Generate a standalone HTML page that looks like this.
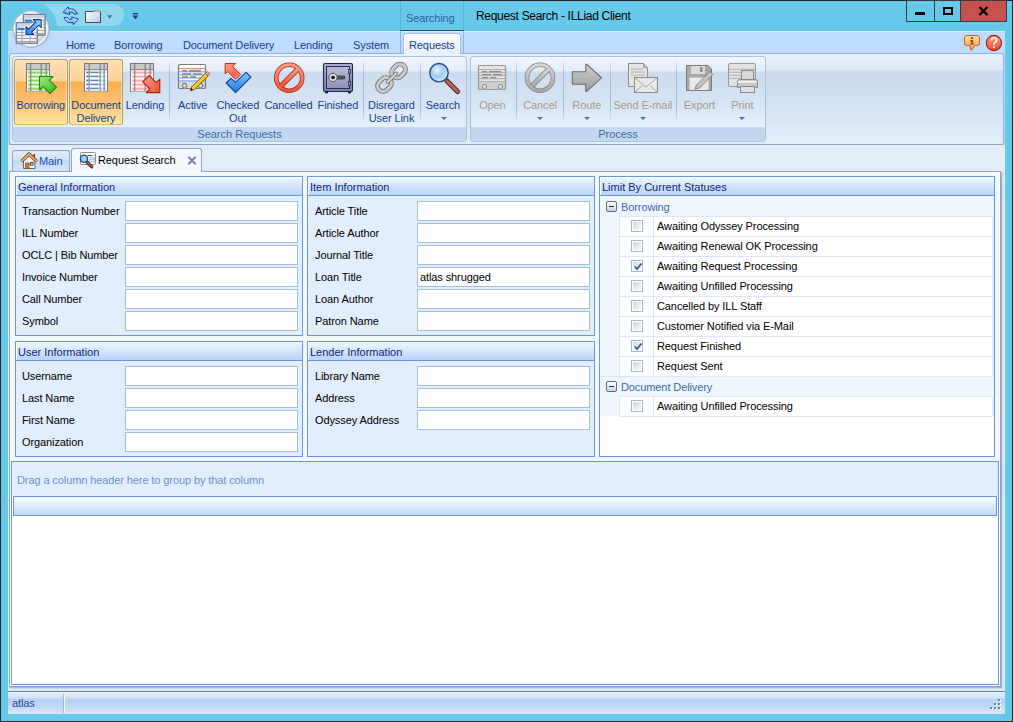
<!DOCTYPE html>
<html><head><meta charset="utf-8">
<style>
*{box-sizing:border-box;margin:0;padding:0}
html,body{width:1013px;height:722px;overflow:hidden;background:#262626;font-family:"Liberation Sans",sans-serif;font-size:11px;color:#000}
.a{position:absolute}
.t{position:absolute;white-space:nowrap;line-height:13px;letter-spacing:-0.1px}
#frame{left:1px;top:1px;width:1011px;height:720px;background:#67C9E9}
/* ribbon */
#tabrow{left:8px;top:31px;width:997px;height:114px;background:#BFDBFF;border-top:1px solid #DDEBFD}
.rtab{color:#15428B;top:39px}
#rbody{left:9px;top:53px;width:995px;height:92px;border:1px solid #8DB2E3;border-bottom-color:#8FA3BF;border-radius:3px;box-shadow:inset 0 -1px 0 #D2F6FA,0 1px 1px rgba(110,130,160,.35);background:linear-gradient(#EAF1FA 0px,#DDE8F5 16px,#C9DAEE 17px,#D6E4F4 60px,#E4EEFA 90px)}
.grp{border:1px solid #A9C3E3;border-radius:3px;background:linear-gradient(#F0F5FC 0px,#E2EBF6 14px,#CBDCEF 15px,#D8E6F6 50px,#E6F0FC 70px)}
.glab{left:0;right:0;bottom:0;height:14px;background:#C2D8F0;color:#3E6AAA;text-align:center;line-height:13px;padding-top:1px;border-radius:0 0 2px 2px}
.btxt{color:#15428B;text-align:center;line-height:13px}
.dis{color:#A59C91}
.sep{width:1px;background:linear-gradient(rgba(164,190,225,0.1),#A4BEE1 20%,#A4BEE1 80%,rgba(164,190,225,0.1))}
.arr{width:0;height:0;border-left:3px solid transparent;border-right:3px solid transparent;border-top:3px solid #4A70B0}
.obtn{border:1px solid #BE9A62;border-bottom-color:#E0B460;border-radius:3px;box-shadow:inset 0 0 0 1px rgba(255,240,200,.5);background:linear-gradient(#FCE0B4 0px,#FBD29A 21px,#F9AE55 22px,#FAC070 40px,#FDE6A2 64px)}
/* doc tabs */
#docarea{left:8px;top:145px;width:997px;height:546px;background:#E3EDFA}
#panel{left:9px;top:171px;width:992px;height:516px;border:1px solid #8DA3C5;box-shadow:inset 1px 1px 0 #fff,inset -1px -1px 0 #fff,1px 1px 1px rgba(120,140,175,.45),2px 2px 2px rgba(150,170,200,.3);background:#F2F7FD}
.gbox{border:1px solid #6A98D6;background:#E3EEFC}
.ghead{left:0;top:0;right:0;height:19px;border-bottom:1px solid #6A98D6;box-shadow:inset 1px 1px 0 #fff;background:linear-gradient(#F0F6FE,#B7D4FA)}
.ghead span{position:absolute;left:2px;top:4px;color:#0F2280}
.lbl{color:#000}
.inp{border:1px solid #A5BEDE;background:#fff;height:20px}
/* statuses */
.srow{height:21px;border:1px solid #DCE8F7;background:#fff}
.ebox{width:11px;height:11px;border:1px solid #5E6E88;border-radius:2px;background:linear-gradient(#FFFFFF,#C9D4E3)}
.ebox:after{content:"";position:absolute;left:2px;top:4px;width:5px;height:1px;background:#1E2D4A}
.chk{width:12px;height:12px;border:1px solid #A3B8D6;box-shadow:inset 0 0 0 1px #fff;background:linear-gradient(135deg,#D2D2D2,#F4F4F4 80%,#fff)}
/* status bar */
#sbar{left:8px;top:691px;width:997px;height:23px;border-top:1px solid #5A7FB5;box-shadow:inset 0 1px 0 #F4F8FD;background:linear-gradient(#E2ECF9 0px,#D3E2F6 6px,#B5D0F3 7px,#C3D8F4 14px,#D6E4F6 21px)}
</style></head><body>
<div id="frame" class="a"></div>

<!-- title bar -->
<div class="t" style="left:476px;top:10px;font-size:12px;letter-spacing:-0.3px;color:#000">Request Search - ILLiad Client</div>
<div class="a" style="left:400px;top:1px;width:64px;height:30px;border-left:1px solid #5BB3D2;border-right:1px solid #5BB3D2;border-bottom:1px solid #2C4A66"></div>
<div class="t" style="left:406px;top:12px;color:#2F5D9C">Searching</div>
<!-- window buttons -->
<div class="a" style="left:906px;top:0px;width:29px;height:22px;border:1px solid #3A3A3A;background:#67C9E9"></div>
<div class="a" style="left:934px;top:0px;width:27px;height:22px;border:1px solid #3A3A3A;background:#67C9E9"></div>
<div class="a" style="left:960px;top:0px;width:47px;height:22px;border:1px solid #3A3A3A;background:#C75050"></div>
<div class="a" style="left:915px;top:12px;width:10px;height:3px;background:#000"></div>
<div class="a" style="left:943px;top:7px;width:10px;height:8px;border:2px solid #000"></div>
<svg class="a" style="left:978px;top:6px" width="11" height="10" viewBox="0 0 11 10"><path d="M1.5 1 L9.5 9 M9.5 1 L1.5 9" stroke="#000" stroke-width="2.3"/></svg>

<!-- ribbon tab row -->
<div id="tabrow" class="a"></div>
<div class="t rtab" style="left:66px">Home</div>
<div class="t rtab" style="left:114px">Borrowing</div>
<div class="t rtab" style="left:183px">Document Delivery</div>
<div class="t rtab" style="left:294px">Lending</div>
<div class="t rtab" style="left:353px">System</div>
<div class="a" style="left:400px;top:31px;width:1px;height:22px;background:#93B3DD"></div><div class="a" style="left:463px;top:31px;width:1px;height:22px;background:#93B3DD"></div><div class="a" style="left:403px;top:33px;width:58px;height:21px;border:1px solid #9FBDE6;border-bottom:none;border-radius:4px 4px 0 0;box-shadow:inset 1px 1px 0 #fff,inset -1px 0 0 #fff;background:linear-gradient(#F8FBFF,#E6EEF9)"></div><div class="a" style="left:404px;top:53px;width:56px;height:1px;background:#E9F0F9;z-index:1"></div>
<div class="t rtab" style="left:409px">Requests</div>

<!-- ribbon body -->
<div id="rbody" class="a"></div>
<div class="a grp" style="left:12px;top:56px;width:455px;height:86px"><div class="a glab">Search Requests</div></div>
<div class="a grp" style="left:470px;top:56px;width:296px;height:86px"><div class="a glab">Process</div></div>

<div class="a obtn" style="left:14px;top:59px;width:54px;height:66px"></div>
<div class="a obtn" style="left:69px;top:59px;width:54px;height:66px"></div>
<div class="t btxt" style="left:0.7999999999999972px;width:80px;top:99px">Borrowing</div>
<div class="t btxt" style="left:56px;width:80px;top:99px">Document</div><div class="t btxt" style="left:56px;width:80px;top:112px">Delivery</div>
<div class="t btxt" style="left:105px;width:80px;top:99px">Lending</div>
<div class="t btxt" style="left:152.7px;width:80px;top:99px">Active</div>
<div class="t btxt" style="left:197.8px;width:80px;top:99px">Checked</div><div class="t btxt" style="left:197.8px;width:80px;top:112px">Out</div>
<div class="t btxt" style="left:248.5px;width:80px;top:99px">Cancelled</div>
<div class="t btxt" style="left:298px;width:80px;top:99px">Finished</div>
<div class="t btxt" style="left:351.5px;width:80px;top:99px">Disregard</div><div class="t btxt" style="left:351.5px;width:80px;top:112px">User Link</div>
<div class="t btxt" style="left:403px;width:80px;top:99px">Search</div>
<div class="t btxt dis" style="left:452.4px;width:80px;top:99px">Open</div>
<div class="t btxt dis" style="left:500px;width:80px;top:99px">Cancel</div>
<div class="t btxt dis" style="left:546.8px;width:80px;top:99px">Route</div>
<div class="t btxt dis" style="left:602.7px;width:80px;top:99px">Send E-mail</div>
<div class="t btxt dis" style="left:659.4px;width:80px;top:99px">Export</div>
<div class="t btxt dis" style="left:702.3px;width:80px;top:99px">Print</div>
<div class="a sep" style="left:169px;top:61px;height:60px"></div>
<div class="a sep" style="left:363px;top:61px;height:60px"></div>
<div class="a sep" style="left:420px;top:61px;height:60px"></div>
<div class="a sep" style="left:516px;top:61px;height:60px"></div>
<div class="a sep" style="left:563px;top:61px;height:60px"></div>
<div class="a sep" style="left:610px;top:61px;height:60px"></div>
<div class="a sep" style="left:676px;top:61px;height:60px"></div>
<div class="a arr" style="left:440.5px;top:117px"></div>
<div class="a arr" style="left:537.0px;top:117px"></div>
<div class="a arr" style="left:583.8px;top:117px"></div>
<div class="a arr" style="left:639.5px;top:117px"></div>
<div class="a arr" style="left:739.3px;top:117px"></div>
<svg class="a" style="left:0;top:0" width="1013" height="150" viewBox="0 0 1013 150"><defs><linearGradient id="gArr" x1="0" y1="0" x2="1" y2="1"><stop offset="0" stop-color="#9BF07A"/><stop offset="1" stop-color="#2FB51A"/></linearGradient><linearGradient id="rArr" x1="0" y1="0" x2="1" y2="1"><stop offset="0" stop-color="#FFA48A"/><stop offset="1" stop-color="#E8502E"/></linearGradient><linearGradient id="rArr2" x1="0" y1="0" x2="1" y2="1"><stop offset="0" stop-color="#FF9E88"/><stop offset=".7" stop-color="#F2684C"/><stop offset="1" stop-color="#F2684C" stop-opacity="0"/></linearGradient><linearGradient id="bChk" x1="0" y1="0" x2="0" y2="1"><stop offset="0" stop-color="#8CC4F8"/><stop offset="1" stop-color="#1A78DA"/></linearGradient><linearGradient id="redC" x1="0" y1="0" x2="0" y2="1"><stop offset="0" stop-color="#FF9F86"/><stop offset="1" stop-color="#E95535"/></linearGradient><linearGradient id="grayC" x1="0" y1="0" x2="0" y2="1"><stop offset="0" stop-color="#D6D6D6"/><stop offset="1" stop-color="#A5A5A5"/></linearGradient><linearGradient id="safe" x1="0" y1="0" x2="0" y2="1"><stop offset="0" stop-color="#A9ACCB"/><stop offset="1" stop-color="#7C80A6"/></linearGradient><linearGradient id="safeIn" x1="0" y1="0" x2="0" y2="1"><stop offset="0" stop-color="#B9BCD8"/><stop offset="1" stop-color="#8D91B5"/></linearGradient><radialGradient id="lens" cx=".4" cy=".35" r=".7"><stop offset="0" stop-color="#E9F4FF"/><stop offset=".5" stop-color="#9CCBF7"/><stop offset="1" stop-color="#DDEEFF"/></radialGradient><linearGradient id="grayA" x1="0" y1="0" x2="0" y2="1"><stop offset="0" stop-color="#CFCFCF"/><stop offset="1" stop-color="#9C9C9C"/></linearGradient><linearGradient id="orbG" x1="0" y1="0" x2="0" y2="1"><stop offset="0" stop-color="#FFFFFF"/><stop offset=".5" stop-color="#E2E5EA"/><stop offset="1" stop-color="#F4F6F8"/></linearGradient></defs><rect x="26.5" y="63.5" width="23" height="28" fill="#fff" stroke="#7A7A7A"/><rect x="27" y="64" width="22" height="5.5" fill="#C9C9C9"/><rect x="28" y="71.5" width="20" height="2.2" fill="#8ED767"/><rect x="28" y="75.5" width="20" height="2.2" fill="#8ED767"/><rect x="28" y="79.5" width="20" height="2.2" fill="#8ED767"/><rect x="28" y="83.5" width="20" height="2.2" fill="#8ED767"/><rect x="28" y="87.5" width="20" height="2.2" fill="#8ED767"/><rect x="27" y="90" width="22" height="1.5" fill="#E4E4E4"/><rect x="30" y="64" width="1.3" height="27" fill="#7F7F7F" opacity=".85"/><rect x="40.5" y="64" width="1.3" height="27" fill="#7F7F7F" opacity=".85"/><rect x="45.5" y="64" width="1.3" height="27" fill="#7F7F7F" opacity=".85"/><rect x="27" y="69" width="22" height="1.2" fill="#8A8A8A"/><path d="M39.5 76.5 L53 76.5 L49.4 80.1 L56.5 87.2 L50.2 93.5 L43.1 86.4 L39.5 90 Z" fill="url(#gArr)" stroke="#1F8A0E" stroke-width="1.1" stroke-linejoin="round"/><rect x="84.5" y="63.5" width="23" height="28" fill="#fff" stroke="#7A7A7A"/><rect x="85" y="64" width="22" height="5.5" fill="#C9C9C9"/><rect x="86" y="71.5" width="20" height="2" fill="#B5D9FB"/><rect x="86.5" y="71.8" width="2" height="1.1" fill="#2E5E9C"/><rect x="90.5" y="71.8" width="8" height="1.1" fill="#3A5F96" opacity=".8"/><rect x="86" y="75.5" width="20" height="2" fill="#B5D9FB"/><rect x="86.5" y="75.8" width="2" height="1.1" fill="#2E5E9C"/><rect x="90.5" y="75.8" width="8" height="1.1" fill="#3A5F96" opacity=".8"/><rect x="86" y="79.5" width="20" height="2" fill="#B5D9FB"/><rect x="86.5" y="79.8" width="2" height="1.1" fill="#2E5E9C"/><rect x="90.5" y="79.8" width="8" height="1.1" fill="#3A5F96" opacity=".8"/><rect x="86" y="83.5" width="20" height="2" fill="#B5D9FB"/><rect x="86.5" y="83.8" width="2" height="1.1" fill="#2E5E9C"/><rect x="90.5" y="83.8" width="8" height="1.1" fill="#3A5F96" opacity=".8"/><rect x="86" y="87.5" width="20" height="2" fill="#B5D9FB"/><rect x="86.5" y="87.8" width="2" height="1.1" fill="#2E5E9C"/><rect x="90.5" y="87.8" width="8" height="1.1" fill="#3A5F96" opacity=".8"/><rect x="85" y="90" width="22" height="1.5" fill="#E4E4E4"/><rect x="88.5" y="64" width="1.3" height="27" fill="#7F7F7F" opacity=".85"/><rect x="99.5" y="64" width="1.3" height="27" fill="#7F7F7F" opacity=".85"/><rect x="103.5" y="64" width="1.3" height="27" fill="#7F7F7F" opacity=".85"/><rect x="85" y="69" width="22" height="1.2" fill="#8A8A8A"/><rect x="130.5" y="63.5" width="23" height="28" fill="#fff" stroke="#7A7A7A"/><rect x="131" y="64" width="22" height="5.5" fill="#C9C9C9"/><rect x="132" y="71.5" width="20" height="2.2" fill="#FFA9A9"/><rect x="132" y="75.5" width="20" height="2.2" fill="#FFA9A9"/><rect x="132" y="79.5" width="20" height="2.2" fill="#FFA9A9"/><rect x="132" y="83.5" width="20" height="2.2" fill="#FFA9A9"/><rect x="132" y="87.5" width="20" height="2.2" fill="#FFA9A9"/><rect x="131" y="90" width="22" height="1.5" fill="#E4E4E4"/><rect x="134" y="64" width="1.3" height="27" fill="#7F7F7F" opacity=".85"/><rect x="144.5" y="64" width="1.3" height="27" fill="#7F7F7F" opacity=".85"/><rect x="149.5" y="64" width="1.3" height="27" fill="#7F7F7F" opacity=".85"/><rect x="131" y="69" width="22" height="1.2" fill="#8A8A8A"/><path d="M159.8 92.6 L146.3 92.6 L149.9 89 L142.8 81.9 L149.1 75.6 L156.2 82.7 L159.8 79.1 Z" fill="url(#rArr)" stroke="#A8200C" stroke-width="1.1" stroke-linejoin="round"/><linearGradient id="cg178" x1="0" y1="0" x2="0" y2="1"><stop offset="0" stop-color="#FFFFFF"/><stop offset=".67" stop-color="#FFFFFF"/><stop offset=".68" stop-color="#D9D9D9"/><stop offset="1" stop-color="#D9D9D9"/></linearGradient><path d="M179.5 64.5 H204.5 Q205.5 64.5 205.5 65.5 V87.5 Q205.5 88.5 204.5 88.5 H201.3 V87.55 A2.2 2.2 0 1 0 199.7 87.55 V88.5 H185.3 V87.55 A2.2 2.2 0 1 0 183.7 87.55 V88.5 H179.5 Q178.5 88.5 178.5 87.5 V65.5 Q178.5 64.5 179.5 64.5 Z" fill="url(#cg178)" stroke="#7D7D7D" stroke-width="1.2"/><rect x="179" y="68" width="26" height="1.3" fill="#F58A8A"/><rect x="179" y="71.2" width="26" height="1.2" fill="#7DA6EE"/><rect x="179" y="74.3" width="26" height="1.2" fill="#7DA6EE"/><rect x="179" y="77.3" width="26" height="1.2" fill="#7DA6EE"/><rect x="179" y="80.3" width="26" height="1.2" fill="#7DA6EE"/><rect x="182" y="70.3" width="5" height="1.1" fill="#666"/><rect x="189" y="70.3" width="12" height="1.1" fill="#666"/><rect x="182" y="73.39999999999999" width="9" height="1.1" fill="#666"/><rect x="193" y="73.39999999999999" width="9" height="1.1" fill="#666"/><rect x="182" y="76.39999999999999" width="6" height="1.1" fill="#666"/><rect x="190" y="76.39999999999999" width="6" height="1.1" fill="#666"/><path d="M190.5 90.8 L191.6 87 L205.3 73.3 L208 76 L194.3 89.7 Z" fill="#F6C829" stroke="#7A4A08" stroke-width="0.9"/><path d="M205.3 73.3 L206.4 72.2 Q207.6 71.2 208.8 72.4 L209 72.6 Q210.1 73.8 209.1 74.9 L208 76 Z" fill="#F39CA0" stroke="#9A5A5A" stroke-width="0.7"/><path d="M190.5 90.5 L191.3 88 L193 89.7 Z" fill="#111"/><path d="M225.2 63.5 L235.6 63.5 L232.7 66.5 L240.5 74.3 L235.5 79.3 L227.7 71.5 L225.2 74 Z" fill="url(#rArr2)" stroke="#C02A1A" stroke-width="1" stroke-linejoin="round"/><path d="M226.2 83 L230.9 78.4 L235.6 82.2 L246.1 72.4 L250.9 77.1 L235.6 92.6 Z" fill="url(#bChk)" stroke="#0A3FA8" stroke-width="1.1" stroke-linejoin="round"/><circle cx="289.2" cy="77.8" r="13" fill="none" stroke="#B8281A" stroke-width="4.6"/><circle cx="289.2" cy="77.8" r="13" fill="none" stroke="url(#redC)" stroke-width="3"/><path d="M281.0 86.0 L297.4 69.6" stroke="#B8281A" stroke-width="5.2"/><path d="M280.59999999999997 86.39999999999999 L297.8 69.2" stroke="url(#redC)" stroke-width="3.4"/><rect x="323.5" y="63.5" width="29" height="28" rx="1.5" fill="url(#safe)" stroke="#23264A" stroke-width="1.1"/><rect x="326.5" y="66.5" width="23" height="22" fill="url(#safeIn)" stroke="#2A2D50" stroke-width="1"/><rect x="325" y="91.5" width="3" height="1.8" fill="#1A1A1A"/><rect x="348" y="91.5" width="3" height="1.8" fill="#1A1A1A"/><rect x="348.5" y="69.5" width="2" height="4" fill="#9EA2C2" stroke="#2A2D50" stroke-width=".8"/><rect x="348.5" y="81.5" width="2" height="4" fill="#9EA2C2" stroke="#2A2D50" stroke-width=".8"/><rect x="333" y="76" width="12" height="3" rx="1.5" fill="#555" stroke="#222" stroke-width=".6"/><circle cx="333" cy="77.5" r="4.2" fill="#D8D8D8" stroke="#555" stroke-width="1"/><circle cx="333" cy="77.5" r="1.8" fill="#111"/><g transform="rotate(-45 384.5 84.5)"><rect x="377" y="79" width="15" height="11" rx="5.5" fill="none" stroke="#707070" stroke-width="4.8"/><rect x="377" y="79" width="15" height="11" rx="5.5" fill="none" stroke="#CACACE" stroke-width="3.2"/></g><g transform="rotate(-45 398.5 71)"><rect x="391" y="65.5" width="15" height="11" rx="5.5" fill="none" stroke="#707070" stroke-width="4.8"/><rect x="391" y="65.5" width="15" height="11" rx="5.5" fill="none" stroke="#CACACE" stroke-width="3.2"/></g><path d="M387.5 82 L396 73.5" stroke="#707070" stroke-width="3.8" stroke-linecap="round"/><path d="M387.5 82 L396 73.5" stroke="#D6D6DA" stroke-width="2.2" stroke-linecap="round"/><path d="M447 81 L457.5 91.5" stroke="#5A1E1E" stroke-width="5" stroke-linecap="round"/><path d="M447 81 L457.5 91.5" stroke="#B06A66" stroke-width="3" stroke-linecap="round"/><circle cx="439" cy="72.7" r="9.2" fill="url(#lens)" stroke="#1F4E86" stroke-width="1.4"/><linearGradient id="cg478" x1="0" y1="0" x2="0" y2="1"><stop offset="0" stop-color="#E4E4E4"/><stop offset=".67" stop-color="#E4E4E4"/><stop offset=".68" stop-color="#CFCFCF"/><stop offset="1" stop-color="#CFCFCF"/></linearGradient><path d="M479.5 65.5 H504.5 Q505.5 65.5 505.5 66.5 V88.5 Q505.5 89.5 504.5 89.5 H501.3 V88.55 A2.2 2.2 0 1 0 499.7 88.55 V89.5 H485.3 V88.55 A2.2 2.2 0 1 0 483.7 88.55 V89.5 H479.5 Q478.5 89.5 478.5 88.5 V66.5 Q478.5 65.5 479.5 65.5 Z" fill="url(#cg478)" stroke="#9A9A9A" stroke-width="1.2"/><rect x="479" y="69.2" width="28" height="1" fill="#A8A8A8"/><rect x="479" y="72.2" width="28" height="1" fill="#A8A8A8"/><rect x="479" y="75.2" width="28" height="1" fill="#A8A8A8"/><rect x="479" y="78.2" width="28" height="1" fill="#A8A8A8"/><rect x="479" y="81.2" width="28" height="1" fill="#A8A8A8"/><rect x="482" y="71.0" width="5" height="1.2" fill="#8E8E8E"/><rect x="489" y="71.0" width="12" height="1.2" fill="#8E8E8E"/><rect x="482" y="74.0" width="9" height="1.2" fill="#8E8E8E"/><rect x="493" y="74.0" width="9" height="1.2" fill="#8E8E8E"/><rect x="482" y="77.0" width="6" height="1.2" fill="#8E8E8E"/><rect x="490" y="77.0" width="6" height="1.2" fill="#8E8E8E"/><circle cx="540" cy="77.8" r="13" fill="none" stroke="#8A8A8A" stroke-width="4.6"/><circle cx="540" cy="77.8" r="13" fill="none" stroke="url(#grayC)" stroke-width="3"/><path d="M531.8 86.0 L548.2 69.6" stroke="#8A8A8A" stroke-width="5.2"/><path d="M531.4 86.39999999999999 L548.6 69.2" stroke="url(#grayC)" stroke-width="3.4"/><path d="M572.8 71.8 H585.8 V65 Q585.8 64 586.8 64.3 L601.5 77.8 L586.8 91.3 Q585.8 91.8 585.8 90.8 V84.3 H572.8 Q572.3 84.3 572.3 83.8 V72.3 Q572.3 71.8 572.8 71.8 Z" fill="url(#grayA)" stroke="#6E6E6E" stroke-width="1.1"/><path d="M628.5 63.5 H643.5 L647.5 67.5 V86.5 H628.5 Z" fill="#E6E6E6" stroke="#8F8F8F" stroke-width="1"/><path d="M643.5 63.5 V67.5 H647.5" fill="#BDBDBD" stroke="#8F8F8F" stroke-width=".8"/><rect x="631" y="68.5" width="12" height="1.2" fill="#B8B8B8"/><rect x="631" y="71.5" width="14" height="1.2" fill="#B8B8B8"/><rect x="631" y="74.5" width="14" height="1.2" fill="#B8B8B8"/><rect x="634.5" y="77.5" width="23" height="15" fill="#E9E9E9" stroke="#8F8F8F" stroke-width="1.1"/><path d="M635 78 L646 87 L657 78 M635 92 L642 85.5 M657 92 L650 85.5" fill="none" stroke="#A8A8A8" stroke-width="1"/><path d="M686.5 65.5 H708 L711.5 69 V90.5 H686.5 Z" fill="#A9A9A9" stroke="#7A7A7A" stroke-width="1"/><rect x="691" y="66" width="14" height="8" fill="#DADADA"/><rect x="700" y="67" width="2.5" height="5" fill="#8A8A8A"/><rect x="689.5" y="77.5" width="19" height="12.5" fill="#E8E8E8"/><path d="M695 89 L696.5 85 L710 71.5 L713 74.5 L699.5 88 Z" fill="#C4C4C4" stroke="#7A7A7A" stroke-width=".9"/><rect x="728.5" y="63.5" width="27" height="23" rx="1.5" fill="#E3E3E3" stroke="#9A9A9A" stroke-width="1"/><rect x="729" y="68.8" width="26" height="1" fill="#B0B0B0"/><rect x="729" y="71.8" width="26" height="1" fill="#B0B0B0"/><rect x="729" y="74.8" width="26" height="1" fill="#B0B0B0"/><rect x="729" y="77.8" width="26" height="1" fill="#B0B0B0"/><rect x="741.5" y="70.5" width="12" height="10" fill="#D8D8D8" stroke="#8A8A8A" stroke-width="1"/><path d="M737.5 81.5 Q737.5 79.5 739.5 79.5 H755.5 Q757.5 79.5 757.5 81.5 V87.5 H737.5 Z" fill="#C9C9C9" stroke="#888" stroke-width="1"/><rect x="738" y="81" width="19" height="1.8" fill="#F2F2F2"/><rect x="740.5" y="86.5" width="14" height="6" fill="#E0E0E0" stroke="#8A8A8A" stroke-width="1"/></svg>
<!-- orb -->

<!-- doc area -->
<div id="docarea" class="a"></div>
<div id="panel" class="a"></div>


<!-- doc tabs -->
<div class="a" style="left:9px;top:171px;width:63px;height:1px;background:#8DA3C5;z-index:1"></div>
<div class="a" style="left:201px;top:171px;width:800px;height:1px;background:#8DA3C5"></div>
<div class="a" style="left:12px;top:150px;width:58px;height:21px;border:1px solid #8DA6CB;border-bottom:none;border-radius:3px 3px 0 0;background:linear-gradient(#E3EDF9,#D2E2F5 45%,#C3D8F2 50%,#D6E5F7)"></div>
<div class="t" style="left:39px;top:155px;color:#2150B4">Main</div>
<div class="a" style="left:71px;top:148px;width:131px;height:24px;border:1px solid #8DA6CB;border-bottom:none;border-radius:3px 3px 0 0;background:#F5F9FE"></div>
<div class="t" style="left:98px;top:154px;color:#000">Request Search</div>
<svg class="a" style="left:187px;top:156px" width="10" height="9" viewBox="0 0 10 9"><path d="M1.3 0.8 L8.7 8.2 M8.7 0.8 L1.3 8.2" stroke="#7587AA" stroke-width="2"/></svg>
<div class="a gbox" style="left:15px;top:176px;width:288px;height:160px"><div class="a ghead"><span>General Information</span></div></div>
<div class="t lbl" style="left:22px;top:205px">Transaction Number</div><div class="a inp" style="left:125px;top:201px;width:173px"></div>
<div class="t lbl" style="left:22px;top:227px">ILL Number</div><div class="a inp" style="left:125px;top:223px;width:173px"></div>
<div class="t lbl" style="left:22px;top:249px">OCLC | Bib Number</div><div class="a inp" style="left:125px;top:245px;width:173px"></div>
<div class="t lbl" style="left:22px;top:271px">Invoice Number</div><div class="a inp" style="left:125px;top:267px;width:173px"></div>
<div class="t lbl" style="left:22px;top:293px">Call Number</div><div class="a inp" style="left:125px;top:289px;width:173px"></div>
<div class="t lbl" style="left:22px;top:315px">Symbol</div><div class="a inp" style="left:125px;top:311px;width:173px"></div>
<div class="a gbox" style="left:307px;top:176px;width:288px;height:160px"><div class="a ghead"><span>Item Information</span></div></div>
<div class="t lbl" style="left:315px;top:205px">Article Title</div><div class="a inp" style="left:417px;top:201px;width:173px"></div>
<div class="t lbl" style="left:315px;top:227px">Article Author</div><div class="a inp" style="left:417px;top:223px;width:173px"></div>
<div class="t lbl" style="left:315px;top:249px">Journal Title</div><div class="a inp" style="left:417px;top:245px;width:173px"></div>
<div class="t lbl" style="left:315px;top:271px">Loan Title</div><div class="a inp" style="left:417px;top:267px;width:173px"></div>
<div class="t lbl" style="left:315px;top:293px">Loan Author</div><div class="a inp" style="left:417px;top:289px;width:173px"></div>
<div class="t lbl" style="left:315px;top:315px">Patron Name</div><div class="a inp" style="left:417px;top:311px;width:173px"></div>
<div class="a gbox" style="left:15px;top:341px;width:288px;height:116px"><div class="a ghead"><span>User Information</span></div></div>
<div class="t lbl" style="left:22px;top:370px">Username</div><div class="a inp" style="left:125px;top:366px;width:173px"></div>
<div class="t lbl" style="left:22px;top:392px">Last Name</div><div class="a inp" style="left:125px;top:388px;width:173px"></div>
<div class="t lbl" style="left:22px;top:414px">First Name</div><div class="a inp" style="left:125px;top:410px;width:173px"></div>
<div class="t lbl" style="left:22px;top:436px">Organization</div><div class="a inp" style="left:125px;top:432px;width:173px"></div>
<div class="a gbox" style="left:307px;top:341px;width:288px;height:116px"><div class="a ghead"><span>Lender Information</span></div></div>
<div class="t lbl" style="left:315px;top:370px">Library Name</div><div class="a inp" style="left:417px;top:366px;width:173px"></div>
<div class="t lbl" style="left:315px;top:392px">Address</div><div class="a inp" style="left:417px;top:388px;width:173px"></div>
<div class="t lbl" style="left:315px;top:414px">Odyssey Address</div><div class="a inp" style="left:417px;top:410px;width:173px"></div>
<div class="a gbox" style="left:599px;top:176px;width:396px;height:281px;background:#fff"><div class="a ghead"><span>Limit By Current Statuses</span></div></div>
<div class="a" style="left:600px;top:196px;width:394px;height:220px;background:#EEF5FD"></div>
<div class="a ebox" style="left:606px;top:201px"></div><div class="t" style="left:621px;top:201px;color:#3D6AB8">Borrowing</div>
<div class="a srow" style="left:619px;top:216px;width:374px"></div><div class="a" style="left:653px;top:216px;width:1px;height:21px;background:#DCE8F7"></div><div class="a chk" style="left:631px;top:220px"></div><div class="t" style="left:657px;top:220px">Awaiting Odyssey Processing</div>
<div class="a srow" style="left:619px;top:236px;width:374px"></div><div class="a" style="left:653px;top:236px;width:1px;height:21px;background:#DCE8F7"></div><div class="a chk" style="left:631px;top:240px"></div><div class="t" style="left:657px;top:240px">Awaiting Renewal OK Processing</div>
<div class="a srow" style="left:619px;top:256px;width:374px"></div><div class="a" style="left:653px;top:256px;width:1px;height:21px;background:#DCE8F7"></div><div class="a chk" style="left:631px;top:260px"><svg class="a" style="left:1px;top:1px" width="10" height="10" viewBox="0 0 10 10"><path d="M2 4.5 L4 7 L8.5 1.5" stroke="#3D5C8A" stroke-width="1.8" fill="none"/></svg></div><div class="t" style="left:657px;top:260px">Awaiting Request Processing</div>
<div class="a srow" style="left:619px;top:276px;width:374px"></div><div class="a" style="left:653px;top:276px;width:1px;height:21px;background:#DCE8F7"></div><div class="a chk" style="left:631px;top:280px"></div><div class="t" style="left:657px;top:280px">Awaiting Unfilled Processing</div>
<div class="a srow" style="left:619px;top:296px;width:374px"></div><div class="a" style="left:653px;top:296px;width:1px;height:21px;background:#DCE8F7"></div><div class="a chk" style="left:631px;top:300px"></div><div class="t" style="left:657px;top:300px">Cancelled by ILL Staff</div>
<div class="a srow" style="left:619px;top:316px;width:374px"></div><div class="a" style="left:653px;top:316px;width:1px;height:21px;background:#DCE8F7"></div><div class="a chk" style="left:631px;top:320px"></div><div class="t" style="left:657px;top:320px">Customer Notified via E-Mail</div>
<div class="a srow" style="left:619px;top:336px;width:374px"></div><div class="a" style="left:653px;top:336px;width:1px;height:21px;background:#DCE8F7"></div><div class="a chk" style="left:631px;top:340px"><svg class="a" style="left:1px;top:1px" width="10" height="10" viewBox="0 0 10 10"><path d="M2 4.5 L4 7 L8.5 1.5" stroke="#3D5C8A" stroke-width="1.8" fill="none"/></svg></div><div class="t" style="left:657px;top:340px">Request Finished</div>
<div class="a srow" style="left:619px;top:356px;width:374px"></div><div class="a" style="left:653px;top:356px;width:1px;height:21px;background:#DCE8F7"></div><div class="a chk" style="left:631px;top:360px"></div><div class="t" style="left:657px;top:360px">Request Sent</div>
<div class="a" style="left:600px;top:376px;width:394px;height:1px;background:#DCE8F7"></div>
<div class="a ebox" style="left:606px;top:381px"></div><div class="t" style="left:621px;top:381px;color:#3D6AB8">Document Delivery</div>
<div class="a srow" style="left:619px;top:396px;width:374px"></div><div class="a" style="left:653px;top:396px;width:1px;height:21px;background:#DCE8F7"></div><div class="a chk" style="left:631px;top:400px"></div><div class="t" style="left:657px;top:400px">Awaiting Unfilled Processing</div>

<!-- grid -->
<div class="a" style="left:11px;top:461px;width:988px;height:224px;border:1px solid #6A98D6;background:#fff;"></div>
<div class="a" style="left:12px;top:462px;width:986px;height:34px;background:#E3EEFC"></div>
<div class="t" style="left:17px;top:474px;color:#6892D6">Drag a column header here to group by that column</div>
<div class="a" style="left:13px;top:496px;width:984px;height:20px;border:1px solid #6A98D6;background:linear-gradient(#F7FAFF,#C3DAF9)"></div>

<!-- misc icons -->
<svg class="a" style="left:0;top:0" width="1013" height="180" viewBox="0 0 1013 180"><defs><radialGradient id="orbF" cx=".5" cy=".35" r=".65"><stop offset="0" stop-color="#FFFFFF"/><stop offset=".55" stop-color="#E9ECF0"/><stop offset=".85" stop-color="#C9CFD6"/><stop offset="1" stop-color="#DDE1E6"/></radialGradient><linearGradient id="oArr" x1="0" y1="1" x2="1" y2="0"><stop offset="0" stop-color="#2C7BDB"/><stop offset="1" stop-color="#A9D4FB"/></linearGradient><linearGradient id="infoG" x1="0" y1="0" x2="0" y2="1"><stop offset="0" stop-color="#FFE0A8"/><stop offset="1" stop-color="#F99A33"/></linearGradient><linearGradient id="helpG" x1="0" y1="0" x2="0" y2="1"><stop offset="0" stop-color="#FFA58C"/><stop offset="1" stop-color="#E44A2E"/></linearGradient><linearGradient id="fold" x1="0" y1="0" x2="1" y2="1"><stop offset="0" stop-color="#FFFFFF"/><stop offset="1" stop-color="#BFC8DC"/></linearGradient><linearGradient id="refr" x1="0" y1="0" x2="0" y2="1"><stop offset="0" stop-color="#D8ECFF"/><stop offset="1" stop-color="#5AA0EE"/></linearGradient></defs><path d="M42 3.5 H113 A11.5 11.5 0 0 1 113 26.5 H57 Q55.5 11 42 3.5 Z" fill="#93D8EE" fill-opacity=".9" stroke="#7CC5E0" stroke-width="1"/><circle cx="31.2" cy="29.4" r="18.6" fill="#8E98A5" opacity=".75"/><circle cx="31" cy="29" r="17.9" fill="url(#orbF)" stroke="#C2C8CF" stroke-width=".8"/><circle cx="31" cy="29" r="16.2" fill="none" stroke="#FFFFFF" stroke-width="1.4" opacity=".9"/><rect x="23.5" y="14.5" width="21.5" height="20.5" fill="#F4F4F4" stroke="#76839A" stroke-width="1.5"/><rect x="24.2" y="15.2" width="20.2" height="3.3" fill="#C9D3EE"/><rect x="25" y="19.5" width="18.5" height="2.3" fill="#3E7CC4"/><rect x="24.5" y="24" width="20" height="0.9" fill="#9AA3AE"/><rect x="24.5" y="27" width="20" height="0.9" fill="#9AA3AE"/><rect x="24.5" y="30" width="20" height="0.9" fill="#9AA3AE"/><rect x="24.5" y="33" width="20" height="0.9" fill="#9AA3AE"/><rect x="16.3" y="22.8" width="21" height="20.5" fill="#F4F4F4" stroke="#76839A" stroke-width="1.5"/><rect x="17" y="23.5" width="19.8" height="3.3" fill="#C9D3EE"/><rect x="17.5" y="27.8" width="18.8" height="2.3" fill="#3E7CC4"/><rect x="17" y="32" width="20" height="1" fill="#9AA3AE"/><rect x="17" y="35" width="20" height="1" fill="#9AA3AE"/><rect x="17" y="38" width="20" height="1" fill="#9AA3AE"/><rect x="17" y="41" width="20" height="1" fill="#9AA3AE"/><rect x="21.5" y="30" width="1" height="13" fill="#9AA3AE"/><rect x="29.5" y="36" width="1" height="7" fill="#9AA3AE"/><path d="M41.2 19.6 L41.2 27.6 L38.75 25.15 L31.55 32.15 L34 34.6 L26 34.6 L26 26.6 L28.45 29.05 L35.65 22.05 L33.2 19.6 Z" fill="none" stroke="#FFFFFF" stroke-width="3" stroke-linejoin="round"/><path d="M41.2 19.6 L41.2 27.6 L38.75 25.15 L31.55 32.15 L34 34.6 L26 34.6 L26 26.6 L28.45 29.05 L35.65 22.05 L33.2 19.6 Z" fill="url(#oArr)" stroke="#0B3C9C" stroke-width="1.1" stroke-linejoin="round"/><path d="M77.5 13.8 Q74.5 7.5 68.5 9 L68.2 6.8 L63 12.5 L69.8 14.6 L69.3 12.2 Q72.6 11.3 74.3 14.2 Z" fill="url(#refr)" stroke="#1A4FA8" stroke-width="1" stroke-linejoin="round"/><path d="M64 17.7 Q67 24 73 22.5 L73.3 24.7 L78.5 19 L71.7 16.9 L72.2 19.3 Q68.9 20.2 67.2 17.3 Z" fill="url(#refr)" stroke="#1A4FA8" stroke-width="1" stroke-linejoin="round"/><path d="M93.5 10.5 H99.5 L100.5 12 V22.5 H85.5 V11.5 H93.5 Z" fill="url(#fold)" stroke="#3C4C6C" stroke-width="1"/><rect x="93.5" y="10.2" width="6.5" height="2" fill="#B8B8B8"/><path d="M107 15.2 H112.3 L109.65 18.8 Z" fill="#4A6FAE"/><rect x="132.7" y="13" width="5.3" height="1.4" fill="#1E3C7A"/><path d="M132.5 15.6 H138.2 L135.35 19.6 Z" fill="#1E3C7A"/><path d="M967 35.5 H977 Q979.5 35.5 979.5 38 V43 Q979.5 45.5 977 45.5 H975 L971.3 50.3 Q970.8 50.6 970.8 50 L969.8 45.5 H967 Q964.5 45.5 964.5 43 V38 Q964.5 35.5 967 35.5 Z" fill="url(#infoG)" stroke="#C4621C" stroke-width="1"/><rect x="970.8" y="37.2" width="2.2" height="1.9" fill="#B04A18"/><path d="M970 40 H973.2 V43.4 H974.2 V44.6 H969.8 V43.4 H971 V41.2 H970 Z" fill="#B04A18"/><circle cx="993.9" cy="43" r="7.6" fill="url(#helpG)" stroke="#A81A18" stroke-width="1.1"/><path d="M991.5 40.5 Q991.6 37.8 994 37.8 Q996.6 37.8 996.5 40.4 Q996.4 42 994.5 43 Q993.9 43.5 993.9 45" fill="none" stroke="#FFFFFF" stroke-width="1.5"/><rect x="993.1" y="46.2" width="1.7" height="1.7" fill="#fff"/><path d="M23.5 159 V168.5 H35 V159 L29.2 154.5 Z" fill="#F2F2F2" stroke="#6A6A6A" stroke-width="1"/><rect x="33.3" y="154" width="1.8" height="4.5" fill="#C8201A"/><path d="M21.5 161.3 L29 154 L36.7 161.3" fill="none" stroke="#5A3310" stroke-width="3.2" stroke-linejoin="round"/><path d="M21.5 161.3 L29 154 L36.7 161.3" fill="none" stroke="#EAAE70" stroke-width="1.8" stroke-linejoin="round"/><rect x="25.5" y="163" width="3.6" height="5.5" fill="#C27A30" stroke="#7A4A14" stroke-width=".6"/><rect x="30.5" y="162.3" width="2.6" height="2.8" fill="#A8D8F8" stroke="#444" stroke-width=".9"/><rect x="80.5" y="152.5" width="15" height="12" rx="1" fill="#FFFFFF" stroke="#8A8A8A" stroke-width="1"/><rect x="87" y="155" width="8" height="1" fill="#F6A0A0"/><rect x="88" y="155" width="4" height="1" fill="#555"/><rect x="89" y="157.3" width="6" height="1" fill="#86AEF0"/><rect x="89" y="159.3" width="6" height="1" fill="#86AEF0"/><rect x="89" y="161.3" width="6" height="1" fill="#86AEF0"/><path d="M87 162 L91.8 166.8" stroke="#5A1A1A" stroke-width="3.2" stroke-linecap="round"/><path d="M87 162 L91.8 166.8" stroke="#A55F5F" stroke-width="1.6" stroke-linecap="round"/><circle cx="84" cy="158.8" r="3.6" fill="#9ECDF6" stroke="#1D4A80" stroke-width="1.3"/></svg>
<div class="t" style="left:420px;top:271px">atlas shrugged</div>
<!-- status bar -->
<div id="sbar" class="a"></div>
<div class="t" style="left:12px;top:697px;color:#1B48A0">atlas</div>
<div class="a" style="left:63px;top:694px;width:1px;height:19px;background:#9DB6DA"></div><div class="a" style="left:64px;top:694px;width:1px;height:19px;background:#F0F6FD"></div><div class="a" style="left:999px;top:700px;width:2px;height:2px;background:#fff"></div><div class="a" style="left:998px;top:699px;width:2px;height:2px;background:#5B85C8"></div><div class="a" style="left:995px;top:704px;width:2px;height:2px;background:#fff"></div><div class="a" style="left:994px;top:703px;width:2px;height:2px;background:#5B85C8"></div><div class="a" style="left:999px;top:704px;width:2px;height:2px;background:#fff"></div><div class="a" style="left:998px;top:703px;width:2px;height:2px;background:#5B85C8"></div><div class="a" style="left:991px;top:708px;width:2px;height:2px;background:#fff"></div><div class="a" style="left:990px;top:707px;width:2px;height:2px;background:#5B85C8"></div><div class="a" style="left:995px;top:708px;width:2px;height:2px;background:#fff"></div><div class="a" style="left:994px;top:707px;width:2px;height:2px;background:#5B85C8"></div><div class="a" style="left:999px;top:708px;width:2px;height:2px;background:#fff"></div><div class="a" style="left:998px;top:707px;width:2px;height:2px;background:#5B85C8"></div>

</body></html>
